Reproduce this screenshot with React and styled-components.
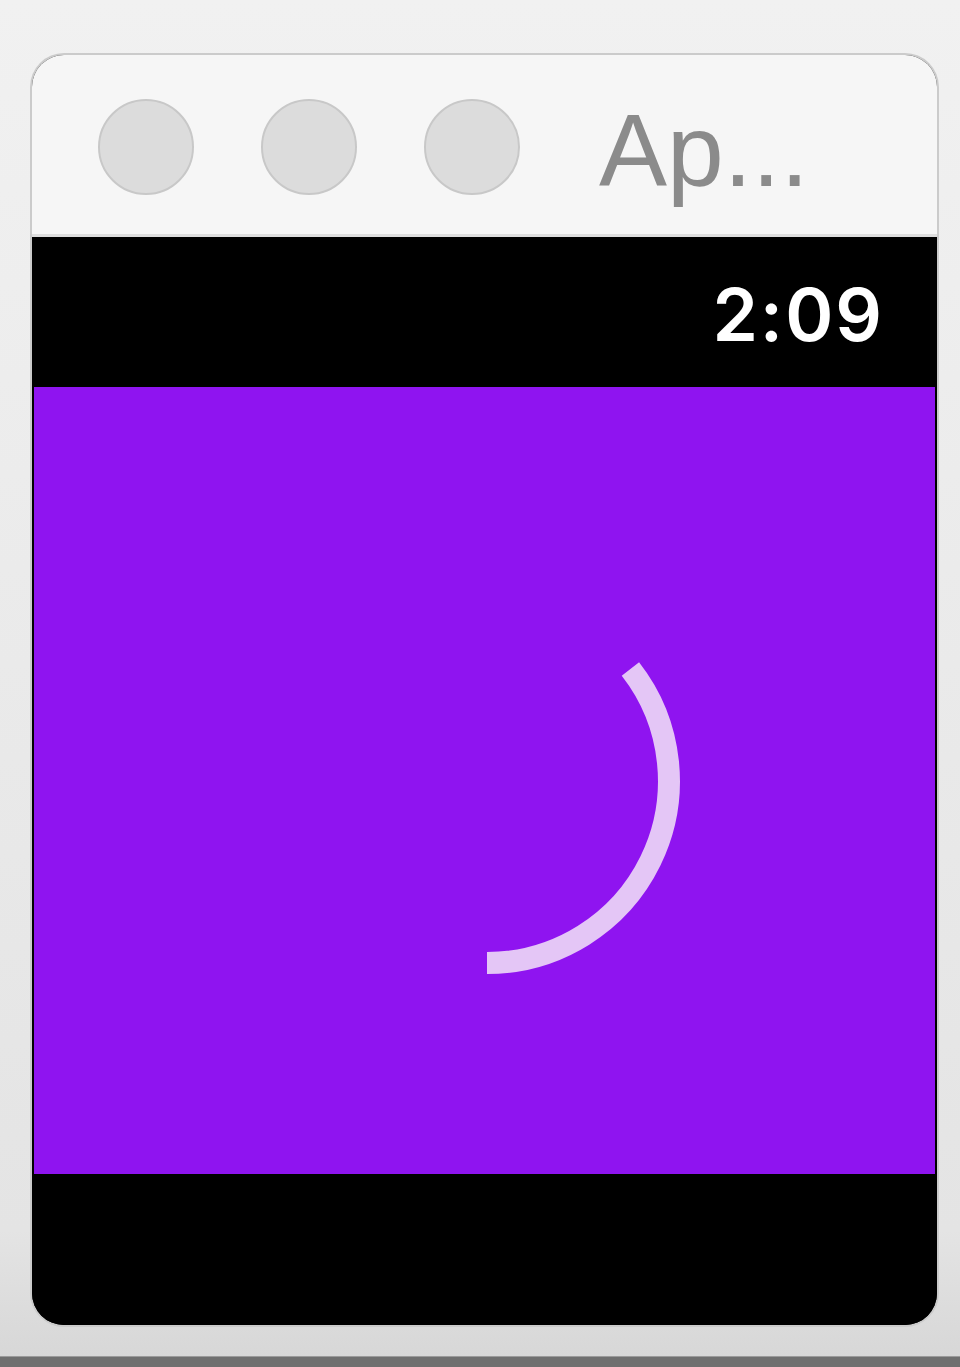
import React from 'react';
import styled, { createGlobalStyle } from 'styled-components';

const GlobalStyle = createGlobalStyle`
	html, body {
		margin: 0;
		padding: 0;
	}

	body {
		background: #ececec;
		font-family: "Liberation Sans", Arial, sans-serif;
	}
`;

const Page = styled.div`
	display: flex;
	flex-direction: column;
	height: 1367px;
	background: linear-gradient(#f1f1f1, #e4e4e4 90%, #d6d6d6);
	overflow: hidden;
`;

const Stage = styled.div`
	flex: 1;
	padding: 55px 23px 0 32px;
`;

const BottomStrip = styled.div`
	height: 10px;
	background: #6f6f6f;
	border-top: 1px solid #9a9a9a;
`;

const Window = styled.div`
	width: 905px;
	height: 1270px;
	display: flex;
	flex-direction: column;
	border-radius: 32px;
	overflow: hidden;
	background: #000;
	box-shadow: 0 0 0 2px #cbcbcb;
`;

const TitleBar = styled.div`
	height: 182px;
	flex: none;
	display: flex;
	align-items: center;
	padding-left: 66px;
	padding-top: 4px;
	gap: 67px;
	background: #f6f6f6;
	border-bottom: 3px solid #dedede;
	box-sizing: border-box;
`;

const Light = styled.div`
	width: 96px;
	height: 96px;
	border-radius: 50%;
	background: #dcdcdc;
	border: 2px solid #c8c8c8;
	box-sizing: border-box;
	flex: none;
`;

const Title = styled.div`
	margin-left: 12px;
	font-size: 102px;
	line-height: 1;
	color: #8b8b8b;
	margin-top: 8px;
`;

const StatusBar = styled.div`
	height: 150px;
	flex: none;
	display: flex;
	align-items: center;
	justify-content: flex-end;
	padding-right: 53px;
	padding-top: 4px;
	box-sizing: border-box;
	background: #000;
`;

const Clock = styled.div`
	font-family: Inter, "Liberation Sans", sans-serif;
	font-weight: 600;
	font-size: 73px;
	letter-spacing: 2px;
	color: #fff;
`;

const Screen = styled.div`
	height: 787px;
	flex: none;
	margin: 0 2px;
	background: #8f14f0;
`;

const Spinner = styled.svg`
	display: block;
	width: 100%;
	height: 100%;
`;

const Footer = styled.div`
	flex: 1;
	background: #000;
`;

const App = () => (
	<Page>
		<GlobalStyle />
		<Stage>
			<Window>
				<TitleBar>
					<Light />
					<Light />
					<Light />
					<Title>Ap...</Title>
				</TitleBar>
				<StatusBar>
					<Clock>2:09</Clock>
				</StatusBar>
				<Screen>
					<Spinner viewBox="0 0 901 787">
						<path
							d="M 596.4 282 A 182 182 0 0 1 453 576"
							fill="none"
							stroke="#e4c6f6"
							strokeWidth="22"
						/>
					</Spinner>
				</Screen>
				<Footer />
			</Window>
		</Stage>
		<BottomStrip />
	</Page>
);

export default App;
